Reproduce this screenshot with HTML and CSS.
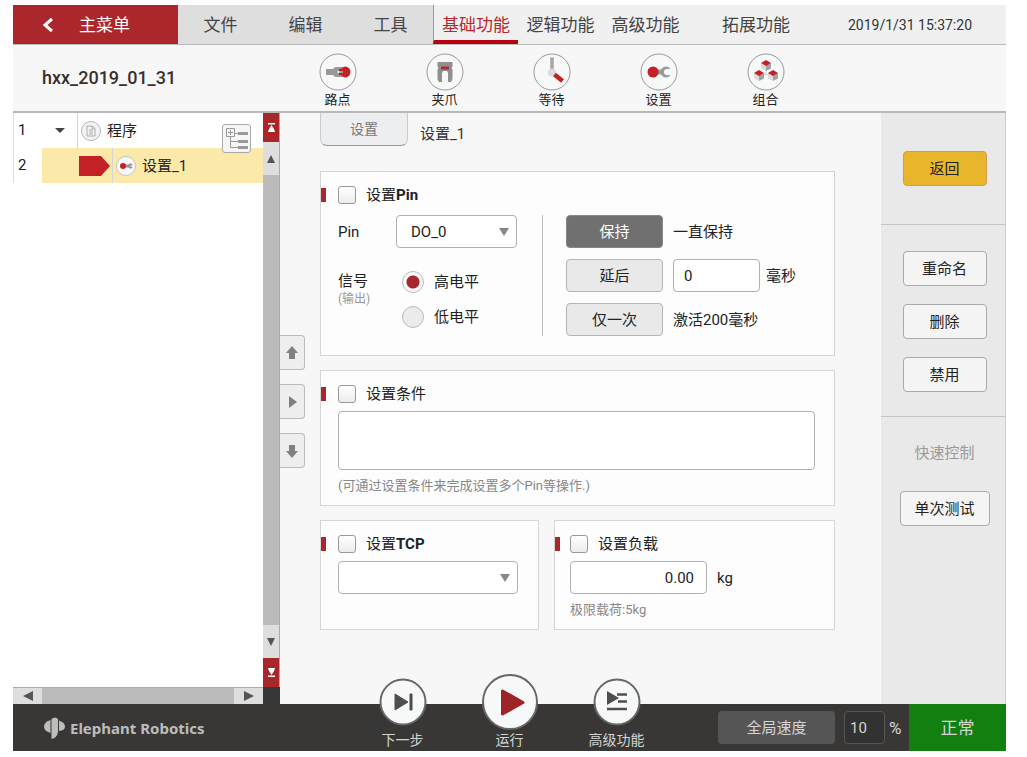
FILE: index.html
```html
<!DOCTYPE html>
<html lang="zh-CN">
<head>
    <meta charset="UTF-8">
    <meta name="viewport" content="width=device-width, initial-scale=1.0">
    <title>hxx_2019_01_31 - Elephant Robotics</title>
    <link rel="stylesheet" href="styles.css">
</head>
<body>
<div class="app">
    <!-- 顶部导航 -->
    <nav class="topbar">
        <button class="main-menu" type="button">
            <svg width="12" height="16" viewBox="0 0 12 16"><path d="M10 2 3 8l7 6" fill="none" stroke="#fff" stroke-width="3"/></svg>
            主菜单
        </button>
        <a class="nav-item dark" href="#">文件</a>
        <a class="nav-item dark" href="#">编辑</a>
        <a class="nav-item dark" href="#">工具</a>
        <a class="nav-item active" href="#">基础功能</a>
        <a class="nav-item" href="#">逻辑功能</a>
        <a class="nav-item" href="#">高级功能</a>
        <a class="nav-item wide" href="#">拓展功能</a>
        <time class="clock">2019/1/31 15:37:20</time>
    </nav>

    <!-- 工具栏 -->
    <header class="toolbar">
        <h1 class="project-name">hxx_2019_01_31</h1>
        <button class="tool" type="button">
            <svg class="tool-icon" viewBox="0 0 38 38">
                <circle class="ring" cx="19" cy="19" r="18"/>
                <path d="M7 16h7l2-2h8v10h-8l-2-2H7z" fill="#999"/>
                <path d="M20 18v-2l3-.5q1-2 3-2a5.500 5.500 0 0 1 0 11q-2 0-3-2l-3-.5v-2h4v-2z" fill="#c42127"/>
                <circle cx="19.500" cy="19" r="1" fill="#fff"/>
            </svg>
            路点
        </button>
        <button class="tool" type="button">
            <svg class="tool-icon" viewBox="0 0 38 38">
                <circle class="ring" cx="19" cy="19" r="18"/>
                <path d="M11.500 9h15v5h-1l1 3v9l-1.500 3h-3v-9l-1-2h-4l-1 2v9h-3l-1.500-3v-9l1-3h-1z" fill="#8f9090"/>
                <path d="M15 13.500h8v3h-8z" fill="#b8262b"/>
            </svg>
            夹爪
        </button>
        <button class="tool" type="button">
            <svg class="tool-icon" viewBox="0 0 38 38">
                <circle class="ring" cx="19" cy="19" r="18"/>
                <path d="M19 4.500V18" stroke="#a5a6a6" stroke-width="3.500"/>
                <circle cx="19" cy="19.500" r="4" fill="#dadbdb"/>
                <path d="m21.500 21.500 8 6.500" stroke="#c42127" stroke-width="4.500"/>
            </svg>
            等待
        </button>
        <button class="tool" type="button">
            <svg class="tool-icon" viewBox="0 0 38 38">
                <circle class="ring" cx="19" cy="19" r="18"/>
                <path d="M16 16.500h5q2-3 5-3 3 0 4.500 2.500H26l-2 1.500v3l2 1.500h4.500q-1.500 2.500-4.500 2.500-3 0-5-3h-5z" fill="#9a9b9b"/>
                <circle cx="13" cy="19" r="5.500" fill="#c42127"/>
            </svg>
            设置
        </button>
        <button class="tool" type="button">
            <svg class="tool-icon" viewBox="0 0 38 38">
                <circle class="ring" cx="19" cy="19" r="18"/>
                <path d="M19 17v4l-6 3m6-3 6 3" fill="none" stroke="#ccc"/>
                <g id="cube">
                    <path d="m14 10 5 2.500V18l-5-2.500z" fill="#dcdcdc"/>
                    <path d="m19 12.500 5-2.500v5.500L19 18z" fill="#a3a3a3"/>
                    <path d="m19 7 5 3-5 3-5-3z" fill="#c42127"/>
                </g>
                <use href="#cube" x="-7" y="10"/>
                <use href="#cube" x="7" y="10"/>
            </svg>
            组合
        </button>
    </header>

    <main class="workspace">
        <!-- 程序树 -->
        <section class="tree">
            <div class="tree-row">
                <span class="line-no">1</span>
                <span class="tree-toggle"><i class="caret"></i></span>
                <span class="tree-label">
                    <svg width="20" height="20" viewBox="0 0 20 20">
                        <circle cx="10" cy="10" r="9.500" fill="#f3f3f3" stroke="#b5b5b5"/>
                        <path d="M6 5h5.500L14 7.500V15H6zM11 5v3h3M8 9h4M8 11h4M8 13h4" fill="none" stroke="#a9b0b3"/>
                    </svg>
                    程序
                </span>
            </div>
            <div class="tree-row selected">
                <span class="line-no">2</span>
                <span class="tree-marker">
                    <svg width="31" height="20" viewBox="0 0 31 20"><path d="M0 0h22l9 10-9 10H0z" fill="#c42127"/></svg>
                </span>
                <span class="tree-label">
                    <svg width="20" height="20" viewBox="0 0 20 20">
                        <circle cx="10" cy="10" r="9.500" fill="#f8f8f8" stroke="#c5c5c5"/>
                        <path d="M9 9h3l2-1h2v1h-2v2h2v1h-2l-2-1H9z" fill="#999" stroke="#999"/>
                        <circle cx="7" cy="10" r="3" fill="#c42127"/>
                    </svg>
                    设置_1
                </span>
            </div>
            <button class="tree-expand" type="button" aria-label="展开">
                <svg width="22" height="22" viewBox="0 0 22 22">
                    <path d="M.5.500h8v8h-8zM2 4.500h5M4.500 2v5M4.500 9v10.500H12M4.500 13.500H12M9 5.500h3" fill="none" stroke="#999"/>
                    <path d="M12 4h10v3H12zM12 12h10v3H12zM12 18h10v3H12z" fill="#999"/>
                </svg>
            </button>
            <div class="hscroll">
                <button class="scroll-step" type="button" aria-label="向左"><i class="tri left"></i></button>
                <span class="scroll-thumb"></span>
                <button class="scroll-step" type="button" aria-label="向右"><i class="tri right"></i></button>
            </div>
        </section>

        <div class="vscroll">
            <button class="scroll-end" type="button" aria-label="到顶部">
                <svg width="7" height="9" viewBox="0 0 7 9"><path d="M0 0h7v1.500H0zM3.500 2 6 6l1 3H0l1-3z" fill="#fff"/></svg>
            </button>
            <button class="scroll-step" type="button" aria-label="向上"><i class="tri up"></i></button>
            <span class="scroll-thumb"></span>
            <button class="scroll-step" type="button" aria-label="向下"><i class="tri down"></i></button>
            <button class="scroll-end" type="button" aria-label="到底部">
                <svg width="7" height="9" viewBox="0 0 7 9"><path d="M0 9h7V7.500H0zM3.500 7 6 3l1-3H0l1 3z" fill="#fff"/></svg>
            </button>
            <span class="corner"></span>
        </div>

        <!-- 移动按钮 -->
        <div class="movers">
            <button class="mover" type="button" aria-label="上移">
                <svg width="12" height="14" viewBox="0 0 12 14"><path d="m6 0 6 7H9v6H3V7H0z"/></svg>
            </button>
            <button class="mover" type="button" aria-label="右移">
                <svg width="12" height="14" viewBox="0 0 12 14"><path d="m3 1 8 6-8 6z"/></svg>
            </button>
            <button class="mover" type="button" aria-label="下移">
                <svg width="12" height="14" viewBox="0 0 12 14"><path d="m6 14 6-7H9V1H3v6H0z"/></svg>
            </button>
        </div>

        <!-- 设置面板 -->
        <section class="panel">
            <div class="panel-head">
                <button class="tab" type="button">设置</button>
                <span class="panel-title">设置_1</span>
            </div>

            <div class="card">
                <label class="card-title"><input type="checkbox" class="check">设置<b>Pin</b></label>
                <div class="pin-fields">
                    <div class="pin-left">
                        <label for="pin">Pin</label>
                        <div class="select-box">
                            <select id="pin" class="field"><option>DO_0</option></select>
                        </div>
                        <div class="signal" id="signal">信号<small>(输出)</small></div>
                        <div class="radios" role="radiogroup" aria-labelledby="signal">
                            <label><input type="radio" class="radio" name="level" checked>高电平</label>
                            <label><input type="radio" class="radio" name="level">低电平</label>
                        </div>
                    </div>
                    <div class="pin-right">
                        <div class="mode-row">
                            <button class="mode on" type="button">保持</button>
                            <span>一直保持</span>
                        </div>
                        <div class="mode-row">
                            <button class="mode" type="button">延后</button>
                            <input id="delay" class="field delay" type="text" value="0">
                            <label class="unit" for="delay">毫秒</label>
                        </div>
                        <div class="mode-row">
                            <button class="mode" type="button">仅一次</button>
                            <span>激活200毫秒</span>
                        </div>
                    </div>
                </div>
            </div>

            <div class="card">
                <label class="card-title"><input type="checkbox" class="check">设置条件</label>
                <textarea class="field condition" aria-label="条件"></textarea>
                <p class="hint">(可通过设置条件来完成设置多个Pin等操作.)</p>
            </div>

            <div class="card-row">
                <div class="card tcp">
                    <label class="card-title"><input type="checkbox" class="check">设置<b>TCP</b></label>
                    <div class="select-box">
                        <select class="field" aria-label="TCP"><option></option></select>
                    </div>
                </div>
                <div class="card load">
                    <label class="card-title"><input type="checkbox" class="check">设置负载</label>
                    <div class="load-row">
                        <input id="load" class="field load-value" type="text" value="0.00">
                        <label for="load">kg</label>
                    </div>
                    <p class="hint">极限载荷:5kg</p>
                </div>
            </div>
        </section>

        <!-- 右侧操作 -->
        <aside class="side">
            <div class="side-group first">
                <button class="side-btn back" type="button">返回</button>
            </div>
            <div class="side-group edit">
                <button class="side-btn" type="button">重命名</button>
                <button class="side-btn" type="button">删除</button>
                <button class="side-btn" type="button">禁用</button>
            </div>
            <div class="side-group quick">
                <p class="side-caption">快速控制</p>
                <button class="side-btn test" type="button">单次测试</button>
            </div>
        </aside>
    </main>

    <!-- 底部状态栏 -->
    <footer class="bottombar">
        <div class="brand">
            <svg width="22" height="22" viewBox="0 0 22 22" fill="#bdbdbc">
                <path d="M6.500 3v13Q0 14 0 9.500T6.500 3z"/>
                <path d="M7.500 2Q11-1 14 2v13q-1 6-6.500 7z"/>
                <path d="M15 3.500q6 2 6 6T15 14z"/>
            </svg>
            Elephant Robotics
        </div>
        <div class="runner">
            <button class="run-btn" type="button">
                <svg class="run-icon" viewBox="0 0 48 48">
                    <circle class="disc" cx="24" cy="24" r="22.500"/>
                    <path d="M16 16v16l13-8zM31 16h2v16h-2z" fill="#4f4d4e" stroke="#4f4d4e" stroke-linejoin="round"/>
                </svg>
                下一步
            </button>
            <button class="run-btn" type="button">
                <svg class="run-icon big" viewBox="0 0 56 56">
                    <circle class="disc" cx="28" cy="28" r="27"/>
                    <path d="M20.500 17v23L41 28.500z" fill="#9f2429" stroke="#9f2429" stroke-width="3" stroke-linejoin="round"/>
                </svg>
                运行
            </button>
            <button class="run-btn" type="button">
                <svg class="run-icon" viewBox="0 0 48 48">
                    <circle class="disc" cx="24" cy="24" r="22.500"/>
                    <path d="m14 13 12 7-12 7z" fill="#4f4d4e"/>
                    <path d="M24 16.500h10M25 23.500h9M14 31h20" stroke="#4f4d4e" stroke-width="2.500"/>
                </svg>
                高级功能
            </button>
        </div>
        <button class="speed-btn" type="button">全局速度</button>
        <input id="speed" class="speed" type="text" value="10" aria-label="全局速度">
        <label class="percent" for="speed">%</label>
        <div class="status">正常</div>
    </footer>
</div>
</body>
</html>
```

FILE: styles.css
```css
* {
    margin: 0;
    padding: 0;
    box-sizing: border-box;
}

body {
    min-height: 100vh;
    display: flex;
    padding: 5px 21px 6px 13px;
    background: #fff;
    color: #222;
    font-family: Roboto, "Noto Sans CJK SC", sans-serif;
    font-size: 15px;
    line-height: 20px;
}

button, input, select, textarea {
    font: inherit;
    color: inherit;
}

button {
    border: none;
    background: none;
    cursor: pointer;
}

a {
    color: inherit;
    text-decoration: none;
}

svg {
    display: block;
    flex: none;
}

.app {
    flex: 1;
    display: flex;
    flex-direction: column;
}

/* 顶部导航 */
.topbar {
    display: flex;
    height: 40px;
    background: #f0f0f0;
    border-bottom: 1px solid #bbb;
    color: #444;
    font-size: 17px;
}

.main-menu {
    width: 165px;
    padding-left: 29px;
    display: flex;
    align-items: center;
    gap: 25px;
    background: #ab272b;
    color: #fff;
}

.nav-item {
    width: 85px;
    display: flex;
    align-items: center;
    justify-content: center;
}

.nav-item.dark {
    background: #dededf;
}

.nav-item.active {
    border-left: 1px solid #999;
    border-bottom: 4px solid #b9000f;
    padding-top: 4px;
    color: #b9272b;
}

.nav-item.wide {
    width: 136px;
}

.clock {
    margin: auto 34px auto auto;
    font-size: 14px;
    color: #333;
}

/* 工具栏 */
.toolbar {
    display: flex;
    height: 68px;
    background: #f7f7f7;
    border-bottom: 2px solid #b8b8b8;
}

.project-name {
    width: 271px;
    padding-left: 29px;
    align-self: center;
    font-size: 18px;
    font-weight: 500;
    color: #3a2f2f;
}

.tool {
    width: 107px;
    display: flex;
    flex-direction: column;
    align-items: center;
    padding-top: 8px;
    font-size: 13px;
    line-height: 18px;
}

.tool-icon {
    width: 38px;
    height: 38px;
}

.ring {
    fill: #f7f9f8;
    stroke: #999;
}

/* 主体 */
.workspace {
    flex: 1;
    display: flex;
    background: #f7f7f7;
}

.tree {
    position: relative;
    width: 250px;
    display: flex;
    flex-direction: column;
    background: #fff;
}

.tree-row {
    display: flex;
    height: 35px;
    align-items: center;
}

.line-no {
    width: 29px;
    padding-left: 4px;
    border-left: 1px solid #ddd;
    line-height: 35px;
}

.tree-toggle {
    width: 35px;
    display: flex;
    justify-content: center;
}

.caret {
    border: 5px solid transparent;
    border-top-color: #444;
    border-bottom: none;
}

.tree-marker {
    width: 70px;
    padding-left: 37px;
}

.tree-label {
    flex: 1;
    display: flex;
    align-items: center;
    gap: 6px;
    height: 35px;
    padding-left: 3px;
    border-left: 1px solid #d5d5d5;
}

.selected .tree-label,
.selected .tree-marker {
    background: #fae9a9;
    height: 35px;
    display: flex;
    align-items: center;
}

.tree-expand {
    position: absolute;
    top: 11px;
    right: 12px;
    width: 29px;
    height: 29px;
    display: flex;
    align-items: center;
    justify-content: center;
    background: #f5f5f5;
    border: 1px solid #aaa;
    border-radius: 3px;
}

/* 滚动条 */
.hscroll {
    display: flex;
    height: 17px;
    margin-top: auto;
    border-top: 1px solid #aaa;
}

.vscroll {
    width: 17px;
    display: flex;
    flex-direction: column;
    border-right: 1px solid #aaa;
}

.scroll-step {
    display: flex;
    align-items: center;
    justify-content: center;
    background: #dededf;
}

.hscroll .scroll-step {
    width: 29px;
}

.vscroll .scroll-step {
    height: 33px;
}

.scroll-thumb {
    flex: 1;
    background: #bbb;
}

.scroll-end {
    height: 29px;
    display: flex;
    align-items: center;
    justify-content: center;
    background: #a8272a;
}

.corner {
    height: 17px;
    margin-right: -1px;
    background: #383735;
}

.tri {
    border: 4px solid transparent;
}

.tri.up {
    border-bottom: 8px solid #555;
    border-top: none;
}

.tri.down {
    border-top: 8px solid #555;
    border-bottom: none;
}

.tri.left {
    border-width: 5px;
    border-right: 10px solid #555;
    border-left: none;
}

.tri.right {
    border-width: 5px;
    border-left: 10px solid #555;
    border-right: none;
}

/* 移动按钮 */
.movers {
    width: 40px;
    padding-top: 222px;
    display: flex;
    flex-direction: column;
    gap: 14px;
}

.mover {
    width: 25px;
    height: 35px;
    display: flex;
    align-items: center;
    justify-content: center;
    background: #eee;
    border: 1px solid #bbb;
    border-left: none;
    border-radius: 0 4px 4px 0;
    fill: #808080;
}

/* 设置面板 */
.panel {
    flex: 1;
    display: flex;
    flex-direction: column;
    gap: 14px;
    padding-right: 46px;
}

.panel-head {
    display: flex;
    height: 44px;
}

.tab {
    width: 88px;
    height: 33px;
    background: #edeef0;
    border: 1px solid #ccc;
    border-top: none;
    border-bottom-color: #999;
    border-radius: 0 0 7px 7px;
    color: #777;
    font-size: 14px;
}

.panel-title {
    padding: 11px 12px;
    color: #333;
}

.card {
    position: relative;
    padding: 10px 19px 9px 17px;
    background: #fdfdfd;
    border: 1px solid #d5d5d5;
}

/* 标题左侧红色标记 */
.card::before {
    content: "";
    position: absolute;
    left: 0;
    top: 16px;
    width: 5px;
    height: 14px;
    background: #ab272b;
}

.card-title {
    display: flex;
    align-items: center;
    height: 26px;
    margin-bottom: 4px;
}

.check {
    appearance: none;
    width: 18px;
    height: 18px;
    margin-right: 10px;
    border: 1px solid #999;
    border-radius: 3px;
    background: linear-gradient(#fff, #ececec);
}

.field {
    display: block;
    height: 33px;
    background: #fff;
    border: 1px solid #b0b0b0;
    border-radius: 4px;
}

.select-box {
    position: relative;
}

.select-box::after {
    content: "";
    position: absolute;
    right: 8px;
    top: 13px;
    border: 5px solid transparent;
    border-top: 8px solid #888;
    border-bottom: none;
    pointer-events: none;
}

.select-box .field {
    appearance: none;
    width: 100%;
    padding-left: 14px;
}

.pin-fields {
    display: flex;
    padding: 3px 0 10px;
}

.pin-left {
    width: 205px;
    display: grid;
    grid-template-columns: 58px 121px;
    grid-template-rows: 33px 70px;
    row-gap: 16px;
    align-items: center;
    border-right: 1px solid #bbb;
}

.signal {
    align-self: start;
    padding-top: 7px;
}

.signal small {
    display: block;
    font-size: 12px;
    line-height: 16px;
    color: #999;
}

.radios {
    padding-left: 6px;
}

.radios label {
    display: flex;
    align-items: center;
    height: 35px;
    gap: 10px;
}

.radio {
    appearance: none;
    width: 22px;
    height: 22px;
    border: 1px solid #bbb;
    border-radius: 50%;
    background: #ebebeb;
}

.radio:checked {
    background: radial-gradient(circle, #a8272a 6px, #f8f8f8 7px);
}

.pin-right {
    padding-left: 23px;
    display: flex;
    flex-direction: column;
    gap: 11px;
}

.mode-row {
    display: flex;
    align-items: center;
    gap: 10px;
}

.mode {
    width: 97px;
    height: 33px;
    background: #e9e9e9;
    border: 1px solid #b5b5b5;
    border-radius: 4px;
}

.mode.on {
    background: #707070;
    border-color: #888;
    color: #fff;
}

.delay {
    width: 87px;
    padding-left: 10px;
}

.unit {
    margin-left: -4px;
}

.condition {
    width: 100%;
    height: 59px;
    resize: none;
    padding: 6px;
}

.hint {
    margin-top: 6px;
    font-size: 13px;
    color: #888;
}

.card-row {
    display: grid;
    grid-template-columns: 219fr 281fr;
    gap: 15px;
}

.tcp {
    padding-right: 20px;
}

.load {
    padding-left: 15px;
}

.load-row {
    display: flex;
    align-items: center;
    gap: 10px;
}

.load-value {
    width: 137px;
    padding-right: 12px;
    text-align: right;
}

/* 右侧操作 */
.side {
    width: 125px;
    background: #e9e9e9;
    border-right: 1px solid #ccc;
}

.side-group {
    display: flex;
    flex-direction: column;
    align-items: center;
    padding: 26px 0 24px 3px;
    gap: 18px;
    border-bottom: 1px solid #c5c5c5;
}

.side-group.first {
    padding: 38px 0 38px 3px;
}

.side-group.quick {
    border-bottom: none;
    gap: 28px;
}

.side-btn {
    width: 84px;
    height: 35px;
    background: #f4f4f4;
    border: 1px solid #aaa;
    border-radius: 4px;
}

.side-btn.back {
    background: #e9b52a;
    border-color: #cfa04a;
}

.side-btn.test {
    width: 90px;
}

.side-caption {
    color: #999;
}

/* 底部状态栏 */
.bottombar {
    position: relative;
    z-index: 1;
    display: flex;
    align-items: center;
    height: 47px;
    background: #383735;
    color: #d5d5d5;
}

.brand {
    width: 336px;
    padding-left: 31px;
    display: flex;
    align-items: center;
    gap: 4px;
    color: #bdbdbc;
    font-family: "Noto Sans", sans-serif;
    font-size: 15px;
    font-weight: 700;
}

/* 圆形按钮高出状态栏 */
.runner {
    display: flex;
    align-items: flex-end;
    align-self: flex-end;
}

.run-btn {
    width: 107px;
    display: flex;
    flex-direction: column;
    align-items: center;
    font-size: 14px;
    line-height: 22px;
}

.run-icon {
    width: 48px;
    height: 48px;
    margin-bottom: 3px;
}

.run-icon.big {
    width: 56px;
    height: 56px;
    margin-bottom: -1px;
}

.disc {
    fill: #f7f9f8;
    stroke: #666;
    stroke-width: 2;
}

.speed-btn {
    width: 117px;
    height: 33px;
    margin-left: auto;
    background: #555;
    border-radius: 4px;
}

.speed {
    width: 41px;
    height: 33px;
    margin: 0 4px 0 9px;
    padding-left: 5px;
    background: #323232;
    border: 1px solid #555;
    border-radius: 4px;
}

.percent {
    width: 20px;
    font-size: 17px;
}

.status {
    width: 97px;
    align-self: stretch;
    display: flex;
    align-items: center;
    justify-content: center;
    background: #118011;
    font-size: 17px;
}
```
